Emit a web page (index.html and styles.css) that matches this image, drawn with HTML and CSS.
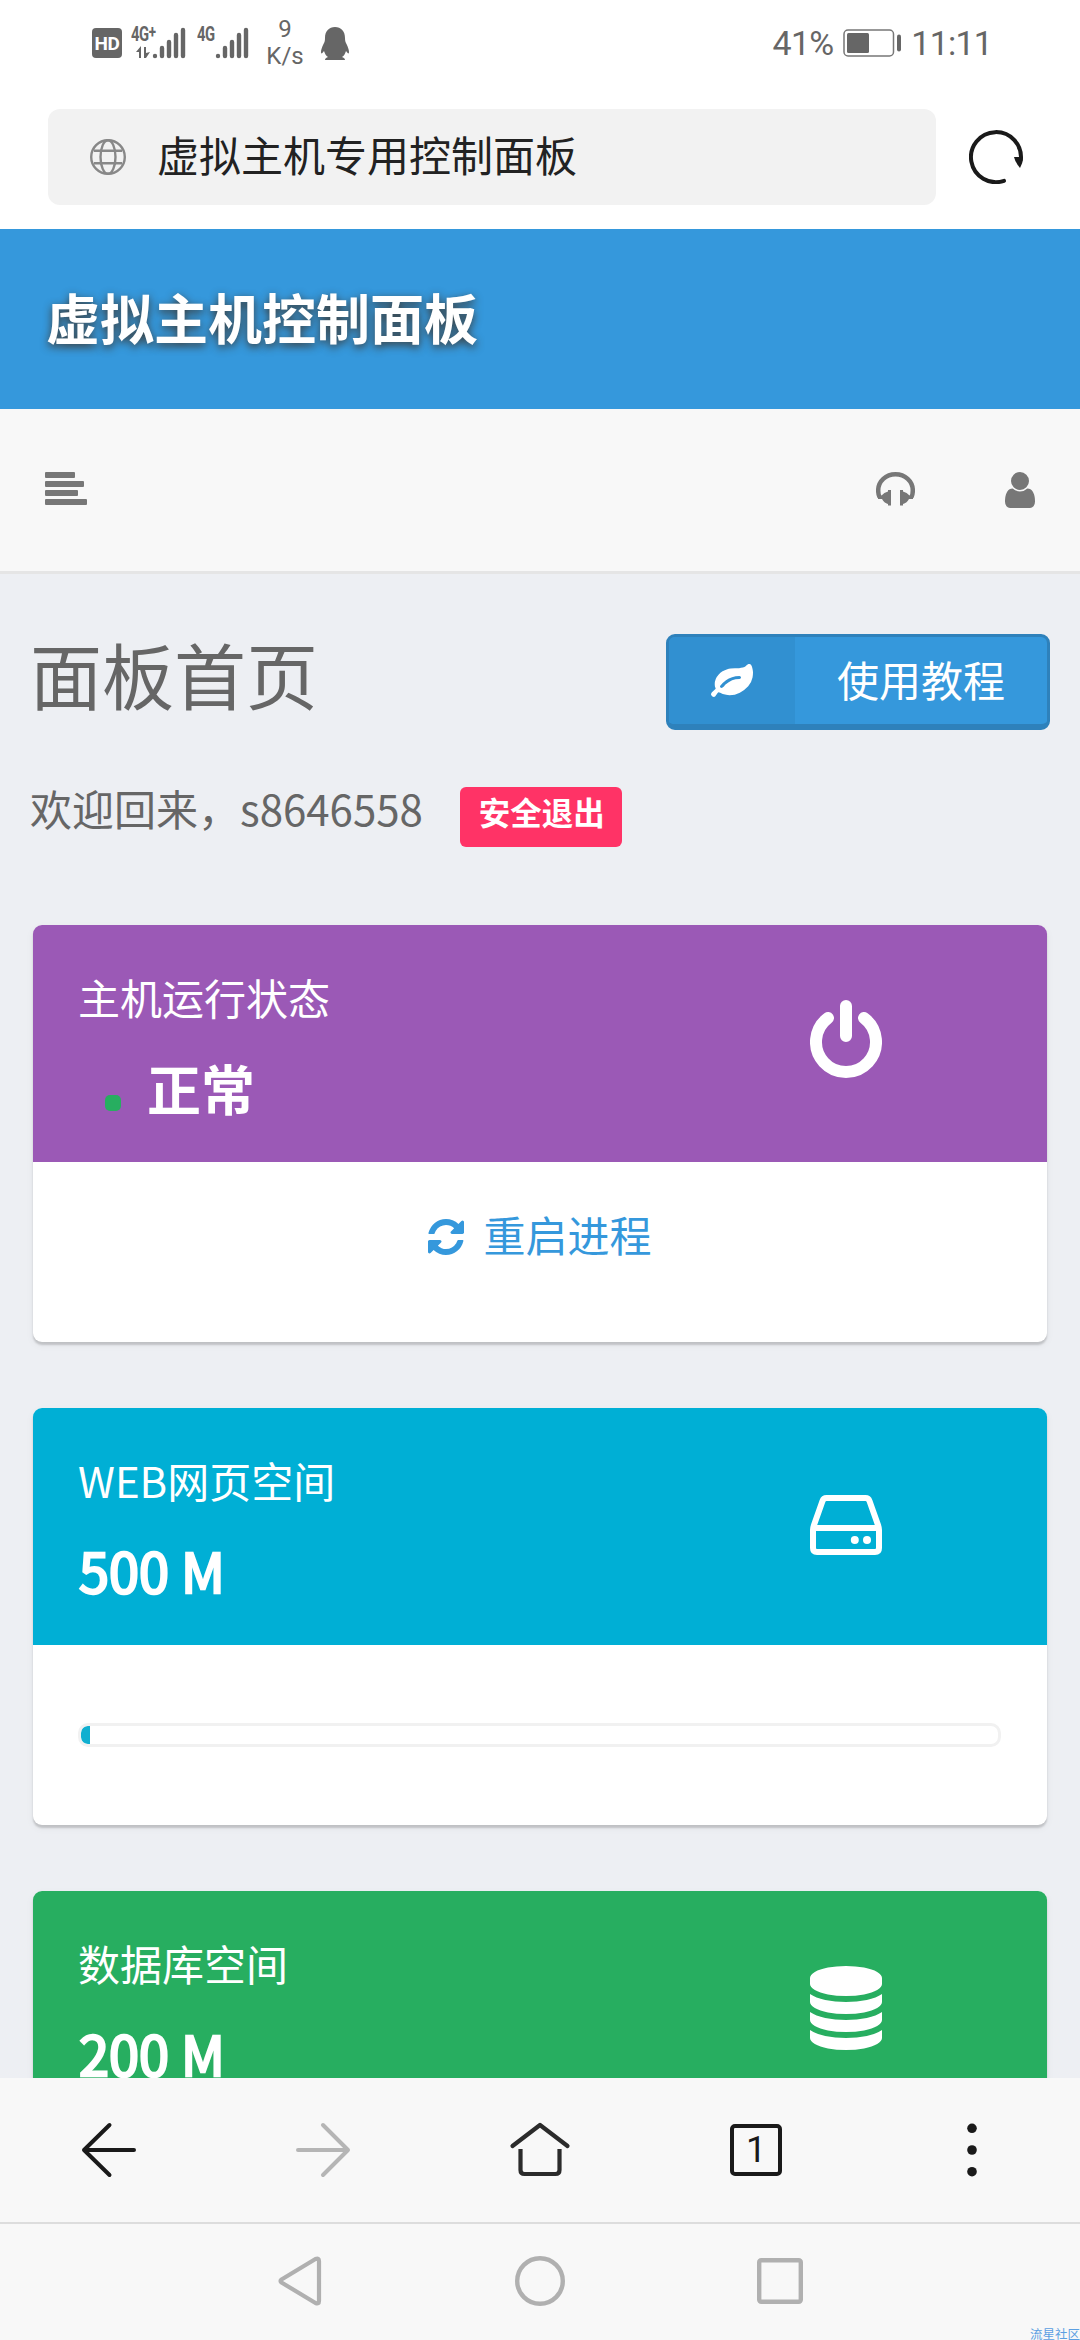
FILE: index.html
```html
<!DOCTYPE html>
<html lang="zh-CN">
<head>
<meta charset="utf-8">
<title>虚拟主机专用控制面板</title>
<link rel="stylesheet" href="styles.css">
</head>
<body>
<div class="screen">
  <header class="status">
    <div class="status-left">
      <span class="hd">HD</span>
      <div class="signal signal-a">
        <span class="net">4G<span class="plus">+</span></span>
        <svg class="bars" width="50" height="32" viewBox="0 0 50 32"><path d="M21 29V29M28 21V29M35 15V29M42 8V29M49 3V29" transform="translate(-2 0)" stroke="#666" stroke-width="4.4" stroke-linecap="round"/><path d="M0 25L5 19V31H3V25zM8 20H10V26L14 25L10 31H8z" fill="#666"/></svg>
      </div>
      <div class="signal signal-b">
        <span class="net">4G</span>
        <svg class="bars" width="34" height="32" viewBox="0 0 34 32"><path d="M3 29V29M10 21V29M17 15V29M24 8V29M31 3V29" stroke="#666" stroke-width="4.4" stroke-linecap="round"/></svg>
      </div>
      <div class="speed"><span>9</span><span>K/s</span></div>
      <svg class="penguin" width="28" height="33" viewBox="0 0 28 33"><path d="M14 0C8 0 4 4 4 11C4 14 3.500 15 2.500 17C1 20 0 23 0 25C0 27 1 27 3 24C4 27 5 29 7 30C4.500 31 4 32 4 33H24C24 32 23.500 31 21 30C23 29 24 27 25 24C27 27 28 27 28 25C28 23 27 20 25.500 17C24.500 15 24 14 24 11C24 4 20 0 14 0z" fill="#666"/></svg>
    </div>
    <div class="status-right">
      <span>41%</span>
      <svg width="58" height="28" viewBox="0 0 58 28"><rect x="1" y="1" width="49.500" height="26" rx="4" fill="none" stroke="#777" stroke-width="1.500"/><rect x="4" y="4" width="22" height="20" rx="1.500" fill="#666"/><rect x="54" y="5.500" width="4" height="17" rx="2" fill="#666"/></svg>
      <span>11:11</span>
    </div>
  </header>

  <div class="address">
    <div class="url">
      <svg width="36" height="36" viewBox="0 0 36 36" fill="none" stroke="#888" stroke-width="2.400"><circle cx="18" cy="18" r="16.800"/><ellipse cx="18" cy="18" rx="7.500" ry="16.800"/><path d="M4 11.700H32M4 24.300H32"/></svg>
      <span>虚拟主机专用控制面板</span>
    </div>
    <svg class="reload" width="54" height="54" viewBox="0 0 54 54"><path d="M35 50.800A25 25 0 1 1 51.800 30" fill="none" stroke="#1a1a1a" stroke-width="4" stroke-linecap="round"/><path d="M45 27H54Q54 33 51 38Q46 32 45 27z" fill="#1a1a1a"/></svg>
  </div>

  <main class="page">
    <div class="brand">虚拟主机控制面板</div>
    <nav class="topnav">
      <svg width="42" height="33" viewBox="0 0 42 33" fill="#777"><rect width="30" height="6" rx="1"/><rect y="9" width="39" height="6" rx="1"/><rect y="18" width="33" height="6" rx="1"/><rect y="27" width="42" height="6" rx="1"/></svg>
      <div class="topnav-right">
        <svg width="39" height="34" viewBox="0 0 39 34"><path d="M3.500 25C2.500 23 2.200 21 2.200 18.500C2.200 9 10 2.300 19.500 2.300S36.800 9 36.800 18.500C36.800 21 36.500 23 35.500 25" fill="none" stroke="#777" stroke-width="4.500"/><path d="M15 18V33.500H12V32Q8 31 6 27H2V23.500H5.500Q8 20.500 12 19.500V18zM24 18V33.500H27V32Q31 31 33 27H37V23.500H33.500Q31 20.500 27 19.500V18z" fill="#777"/></svg>
        <svg width="30" height="36" viewBox="256 128 1280 1536" fill="#777"><path d="M1536 1399q0 109-62.500 187t-150.500 78h-854q-88 0-150.500-78t-62.500-187q0-85 8.500-160.500t31.500-152 58.500-131 94-89 134.500-34.500q131 128 313 128t313-128q76 0 134.500 34.500t94 89 58.500 131 31.500 152 8.500 160.500zm-256-887q0 159-112.500 271.500t-271.500 112.500-271.500-112.500-112.500-271.500 112.500-271.500 271.500-112.500 271.500 112.500 112.500 271.500z"/></svg>
      </div>
    </nav>

    <section class="intro">
      <div class="intro-row">
        <h1>面板首页</h1>
        <a class="guide">
          <span class="guide-icon"><svg width="42" height="42" viewBox="0 0 1792 1792" fill="#fff"><path d="M1280 704q0-26-19-45t-45-19q-172 0-318 49.500t-259.500 134-235.500 219.500q-19 21-19 45 0 26 19 45t45 19q24 0 45-19 27-24 74-71t67-66q137-124 268.500-176t313.500-52q26 0 45-19t19-45zm512-198q0 95-20 193-46 224-184.500 383t-357.500 268q-214 108-438 108-148 0-286-47-15-5-88-42t-96-37q-16 0-39.500 32t-45 70-52.500 70-60 32q-43 0-63.500-17.500t-45.500-59.500q-2-4-6-11t-5.500-10-3-9.500-1.500-13.500q0-35 31-73.500t68-65.500 68-56 31-48q0-4-14-38t-16-44q-9-51-9-104 0-115 43.500-220t119-184.500 170.500-139 204-95.500q55-18 145-25.500t179.500-9 178.500-6 163.500-24 113.500-56.500l29.500-29.500 29.500-28 27-20 36.500-16 43.500-4.500q39 0 70.500 46t47.500 112 24 124 8 96z"/></svg></span>
          <span class="guide-text">使用教程</span>
        </a>
      </div>
      <div class="welcome"><span>欢迎回来，s8646558</span><a class="logout">安全退出</a></div>
    </section>

    <section class="cards">
      <article class="card">
        <div class="card-head purple">
          <div class="card-info">
            <div class="card-title">主机运行状态</div>
            <div class="card-value status-value"><i class="dot"></i><b>正常</b></div>
          </div>
          <svg class="power" width="72" height="78" viewBox="0 0 72 78" fill="none" stroke="#fff" stroke-width="12" stroke-linecap="round"><path d="M18 18A30 30 0 1 0 54 18M36 6V36"/></svg>
        </div>
        <div class="card-body restart">
          <svg width="36" height="36" viewBox="0 0 1536 1536" fill="#3598dc"><path d="M1511 928q0 5-1 7-64 268-268 434.500t-478 166.500q-146 0-282.500-55t-243.500-157l-129 129q-19 19-45 19t-45-19-19-45v-448q0-26 19-45t45-19h448q26 0 45 19t19 45-19 45l-137 137q71 66 161 102t187 36q134 0 250-65t186-179q11-17 53-117 8-23 30-23h192q13 0 22.500 9.500t9.500 22.500zm25-800v448q0 26-19 45t-45 19h-448q-26 0-45-19t-19-45 19-45l138-138q-148-137-349-137-134 0-250 65t-186 179q-11 17-53 117-8 23-30 23h-199q-13 0-22.500-9.500t-9.500-22.500v-7q65-268 270-434.500t480-166.500q146 0 284 55.500t245 156.500l130-129q19-19 45-19t45 19 19 45z"/></svg>
          <span>重启进程</span>
        </div>
      </article>

      <article class="card">
        <div class="card-head cyan">
          <div class="card-info">
            <div class="card-title">WEB网页空间</div>
            <div class="card-value">500 M</div>
          </div>
          <svg class="hdd" width="72" height="60" viewBox="0 0 72 60"><path d="M3 35V53Q3 57 7 57H65Q69 57 69 53V35Q69 33 68 30L59.500 6Q58.500 3 55.500 3H16.500Q13.500 3 12.500 6L4 30Q3 33 3 35zM4 33H68" fill="none" stroke="#fff" stroke-width="6"/><circle cx="44.800" cy="45" r="4" fill="#fff"/><circle cx="57" cy="45" r="4" fill="#fff"/></svg>
        </div>
        <div class="card-body usage"><div class="track"><div class="fill" style="width:1%"></div></div></div>
      </article>

      <article class="card">
        <div class="card-head green">
          <div class="card-info">
            <div class="card-title">数据库空间</div>
            <div class="card-value">200 M</div>
          </div>
          <svg class="db" width="72" height="84" viewBox="0 0 1536 1792" fill="#fff"><path d="M768 768q237 0 443-43t325-127v170q0 69-103 128t-280 93.500-385 34.500-385-34.500-280-93.500-103-128v-170q119 84 325 127t443 43zm0 768q237 0 443-43t325-127v170q0 69-103 128t-280 93.500-385 34.500-385-34.500-280-93.500-103-128v-170q119 84 325 127t443 43zm0-384q237 0 443-43t325-127v170q0 69-103 128t-280 93.500-385 34.500-385-34.500-280-93.500-103-128v-170q119 84 325 127t443 43zm0-1152q208 0 385 34.500t280 93.500 103 128v128q0 69-103 128t-280 93.500-385 34.500-385-34.500-280-93.500-103-128v-128q0-69 103-128t280-93.500 385-34.500z"/></svg>
        </div>
      </article>
    </section>
  </main>

  <nav class="toolbar">
    <svg width="60" height="60" viewBox="0 0 60 60" fill="none" stroke="#1a1a1a" stroke-width="4" stroke-linecap="round" stroke-linejoin="round"><path d="M31.500 5L6 30L31.500 55M6 30H56"/></svg>
    <svg width="60" height="60" viewBox="0 0 60 60" fill="none" stroke="#b5b5b5" stroke-width="4" stroke-linecap="round" stroke-linejoin="round"><path d="M29 5L54 30L29 55M4 30H54"/></svg>
    <svg width="62" height="60" viewBox="0 0 62 60" fill="none" stroke="#2b2b2b" stroke-width="4.200" stroke-linecap="round" stroke-linejoin="round"><path d="M3.500 26L31 5L58.500 26"/><path d="M11.500 29V50Q11.500 54 15.500 54H46.500Q50.500 54 50.500 50V29" stroke-linecap="butt"/></svg>
    <span class="tabs">1</span>
    <svg width="12" height="60" viewBox="0 0 12 60" fill="#1a1a1a"><circle cx="6" cy="8.300" r="4.800"/><circle cx="6" cy="30" r="4.800"/><circle cx="6" cy="51.700" r="4.800"/></svg>
  </nav>
  <footer class="sysnav">
    <svg width="44" height="50" viewBox="0 0 44 50" fill="none" stroke="#b0b0b0" stroke-width="4.200" stroke-linejoin="round"><path d="M3.500 23.500L37.500 3Q41 1.500 41 5V45Q41 48.500 37.500 47L3.500 26.500Q1.500 25 3.500 23.500z"/></svg>
    <svg width="50" height="50" viewBox="0 0 50 50" fill="none" stroke="#b0b0b0" stroke-width="4.400"><circle cx="25" cy="25" r="22.800"/></svg>
    <svg width="46" height="46" viewBox="0 0 46 46" fill="none" stroke="#b0b0b0" stroke-width="4.400"><rect x="2.200" y="2.200" width="41.600" height="41.600" rx="2"/></svg>
    <span class="mark">流星社区</span>
  </footer>
</div>
</body>
</html>
```

FILE: styles.css
```css
* { box-sizing: border-box; }
body { margin: 0; font-family: "Noto Sans CJK SC", sans-serif; }
svg { display: block; flex: none; }
.screen { width: 1080px; height: 2340px; display: flex; flex-direction: column; overflow: hidden; background: #fff; white-space: nowrap; }

.status { height: 92px; flex: none; display: flex; justify-content: space-between; padding: 0 88px 0 92px; color: #666; font-family: Roboto, sans-serif; }
.status-left { display: flex; align-items: flex-start; }
.hd { width: 30px; height: 30px; margin-top: 28px; border-radius: 4px; background: #666; color: #fff; font: 700 19px/31px Roboto, sans-serif; letter-spacing: -.5px; text-align: center; }
.signal { display: flex; margin-top: 27px; }
.net { font: 700 20px/15px Roboto, sans-serif; letter-spacing: -.5px; width: 27px; transform: scaleX(.74); transform-origin: 0 0; }
.plus { font-size: 18px; line-height: 1px; vertical-align: 3px; }
.signal-a { margin-left: 9px; }
.signal-a .bars { margin-left: -22px; }
.signal-b { margin-left: 11px; }
.signal-b .bars { margin-left: -9px; }
.speed { display: flex; flex-direction: column; align-items: center; width: 36px; margin: 16px 0 0 18px; font-size: 24px; line-height: 27px; }
.penguin { margin: 27px 0 0 18px; }
.status-right { display: flex; align-items: center; height: 86px; gap: 10px; font-size: 34px; letter-spacing: -.8px; }

.address { height: 137px; flex: none; display: flex; align-items: flex-start; gap: 33px; padding: 17px 0 0 48px; }
.url { width: 888px; height: 96px; border-radius: 12px; background: #f2f2f2; display: flex; align-items: center; gap: 31px; padding-left: 42px; font-size: 42px; color: #222; line-height: 92px; }
.url span { margin-top: -6px; }
.reload { margin-top: 21px; }

.page { height: 1849px; flex: none; overflow: hidden; background: #edeff3; }
.brand { height: 180px; background: #3598dc; color: #fff; padding-left: 46px; font-size: 54px; font-weight: 700; line-height: 176px; text-shadow: 0 3px 9px rgba(60,50,40,.9); }
.topnav { height: 165px; background: #f8f8f8; border-bottom: 3px solid #e5e5e5; display: flex; align-items: flex-start; justify-content: space-between; padding: 63px 45px 0 45px; }
.topnav-right { display: flex; align-items: flex-start; gap: 90px; }
.intro { height: 351px; padding: 60px 30px 0 30px; color: #666; }
.intro-row { display: flex; justify-content: space-between; align-items: flex-start; }
h1 { margin: 0; font-size: 72px; font-weight: 400; line-height: 78px; }
.guide { width: 384px; height: 96px; border: 3px solid #2e81bb; border-bottom-width: 6px; border-radius: 9px; background: #3598dc; display: flex; overflow: hidden; color: #fff; }
.guide-icon { width: 126px; background: #3190d1; display: flex; justify-content: center; padding-top: 24px; }
.guide-text { flex: 1; text-align: center; font-size: 42px; line-height: 83px; }
.welcome { display: flex; align-items: flex-start; gap: 37px; margin-top: 57px; font-size: 42px; line-height: 42px; }
.logout { width: 162px; height: 60px; border-radius: 6px; background: #ff3366; color: #fff; font-size: 31.500px; font-weight: 700; text-align: center; line-height: 49px; padding-left: 2px; }

.cards { padding: 0 33px; display: flex; flex-direction: column; gap: 66px; }
.card { height: 417px; flex: none; border-radius: 9px; background: #fff; box-shadow: 0 3px 2px rgba(0,0,0,.16), 0 3px 9px rgba(0,0,0,.05); overflow: hidden; }
.card-head { height: 237px; display: flex; justify-content: space-between; color: #fff; padding: 0 165px 0 45px; }
.purple { background: #9b59b6; }
.cyan { background: #00afd5; }
.green { background: #27ae60; }
.card-title { margin-top: 40px; font-size: 42px; line-height: 63px; }
.card-value { margin-top: 18px; padding-left: 1px; font-size: 54px; line-height: 81px; -webkit-text-stroke: 2.500px #fff; }
.status-value { display: flex; align-items: flex-start; -webkit-text-stroke: 0; }
.status-value b { margin-top: 1px; }
.dot { width: 16px; height: 16px; margin: 49px 26px 0 26px; border-radius: 5px; background: #27ae60; }
.power { margin-top: 75px; }
.hdd { margin-top: 87px; }
.db { margin-top: 75px; }
.card-body { height: 180px; }
.restart { display: flex; justify-content: center; gap: 19px; color: #3598dc; font-size: 42px; line-height: 42px; padding-top: 51px; }
.restart svg { margin-top: 6px; }
.usage { padding: 78px 46px 0 45px; }
.track { height: 24px; border: 3px solid #f1f1f1; border-radius: 10px; overflow: hidden; }
.fill { height: 100%; background: #11afd0; border-radius: 6px 0 0 6px; }

.toolbar { height: 146px; flex: none; background: #f8f8f8; border-bottom: 2px solid #ddd; display: grid; grid-template-columns: repeat(5, 216px); justify-items: center; align-items: center; }
.tabs { width: 52px; height: 52px; border: 4px solid #1a1a1a; border-radius: 5px; color: #1a1a1a; font: 36px/45px Roboto, sans-serif; text-align: center; }
.sysnav { flex: 1; position: relative; background: #f8f8f8; display: grid; grid-template-columns: repeat(3, 240px); padding: 0 180px 2px; justify-items: center; align-items: center; }
.mark { position: absolute; right: 0; bottom: 0; color: #5b9fe2; font-size: 12.500px; line-height: 13px; }
```
